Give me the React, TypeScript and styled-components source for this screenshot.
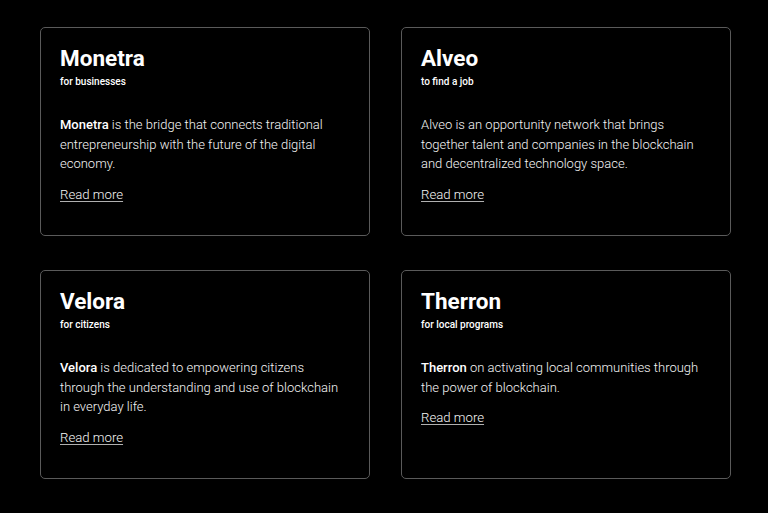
import React from "react";
import styled, { createGlobalStyle } from "styled-components";

const GlobalStyle = createGlobalStyle`
  html, body {
    margin: 0;
    padding: 0;
    background: #000;
  }
  body {
    font-family: Roboto, "Liberation Sans", sans-serif;
    color: #fff;
  }
`;

interface IProject {
    name: string,
    tagline: string,
    boldName: boolean,
    text: string
}

const projects: IProject[] = [
    {
        name: 'Monetra',
        tagline: 'for businesses',
        boldName: true,
        text: ' is the bridge that connects traditional entrepreneurship with the future of the digital economy.'
    },
    {
        name: 'Alveo',
        tagline: 'to find a job',
        boldName: false,
        text: ' is an opportunity network that brings together talent and companies in the blockchain and decentralized technology space.'
    },
    {
        name: 'Velora',
        tagline: 'for citizens',
        boldName: true,
        text: ' is dedicated to empowering citizens through the understanding and use of blockchain in everyday life.'
    },
    {
        name: 'Therron',
        tagline: 'for local programs',
        boldName: true,
        text: ' on activating local communities through the power of blockchain.'
    }
];

const App = () => {
    return (
        <>
            <GlobalStyle />
            <Page>
                <Grid>
                    {projects.map(p => (
                        <Card key={p.name}>
                            <Title>{p.name}</Title>
                            <Tagline>{p.tagline}</Tagline>
                            <Description>
                                {p.boldName ? <strong>{p.name}</strong> : p.name}
                                {p.text}
                            </Description>
                            <ReadMore href="#">Read more</ReadMore>
                        </Card>
                    ))}
                </Grid>
            </Page>
        </>
    )
}

const Page = styled.div`
  min-height: 513px;
  padding: 27px 38px 0 40px;
  box-sizing: border-box;
  background: #000;
`;

const Grid = styled.div`
  display: grid;
  grid-template-columns: 330px 330px;
  column-gap: 31px;
  row-gap: 34px;
`;

const Card = styled.div`
  height: 209px;
  box-sizing: border-box;
  border: 1px solid #5a5a5a;
  border-radius: 5px;
  padding: 16px 19px 0 19px;
  display: flex;
  flex-direction: column;
  align-items: flex-start;
`;

const Title = styled.h2`
  margin: 0;
  font-size: 22.5px;
  font-weight: 700;
  line-height: 28px;
  color: #fff;
`;

const Tagline = styled.div`
  margin-top: 3px;
  font-size: 10px;
  font-weight: 500;
  line-height: 13px;
  color: #fff;
`;

const Description = styled.p`
  margin: 27px 0 0 0;
  font-size: 13px;
  font-weight: 300;
  line-height: 19.5px;
  color: #f6f6f6;
  max-width: 290px;

  strong {
    font-weight: 500;
    color: #fff;
  }
`;

const ReadMore = styled.a`
  margin-top: 11px;
  font-size: 13.2px;
  font-weight: 300;
  line-height: 19px;
  color: #f6f6f6;
  text-decoration: underline;
  text-decoration-color: #b0b0b0;
  text-underline-offset: 2px;
`;

export default App;
